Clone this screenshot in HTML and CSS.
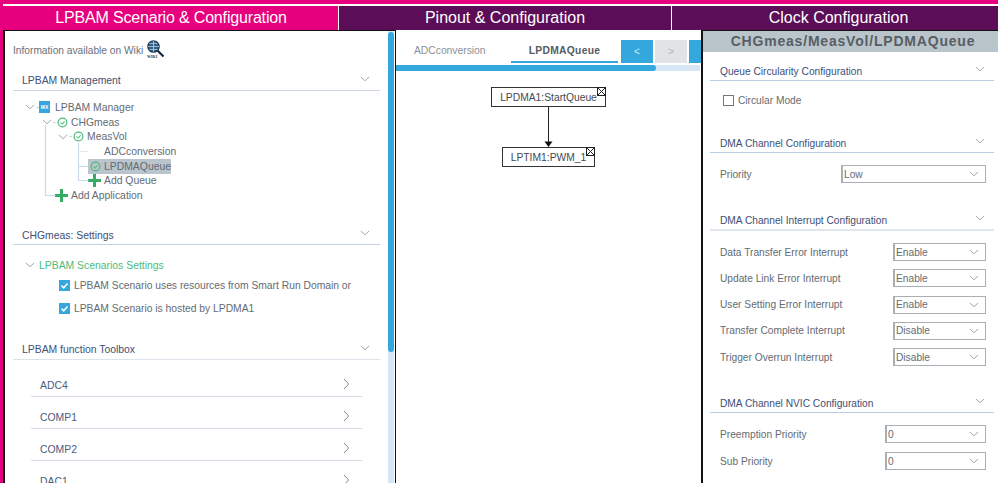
FILE: index.html
```html
<!DOCTYPE html>
<html lang="en">
<head>
<meta charset="utf-8">
<title>LPBAM Scenario &amp; Configuration</title>
<link rel="stylesheet" href="styles.css">
</head>
<body>
<svg class="defs" width="0" height="0" aria-hidden="true">
  <symbol id="chev" viewBox="0 0 12 7"><path d="M1 1l5 4.600L11 1" fill="none" stroke="#8f98a3" stroke-width="1"/></symbol>
  <symbol id="right" viewBox="0 0 7 12"><path d="M1 1l4.600 5L1 11" fill="none" stroke="#7f8791" stroke-width="1"/></symbol>
  <symbol id="ok" viewBox="0 0 12 12"><circle cx="6" cy="6" r="4.800" fill="none" stroke="#4dbb7b" stroke-width="1.300"/><path d="M3.800 6l1.700 1.700 2.800-3" fill="none" stroke="#4dbb7b" stroke-width="1.100"/></symbol>
  <symbol id="plus" viewBox="0 0 13 13"><path d="M6.500 0v13M0 6.500h13" fill="none" stroke="#36ab63" stroke-width="3"/></symbol>
  <symbol id="tick" viewBox="0 0 11 11"><rect width="11" height="11" fill="#34a8dc"/><path d="M2.500 5.600l2.200 2.200 3.800-4.400" fill="none" stroke="#fff" stroke-width="1.500"/></symbol>
  <symbol id="close" viewBox="0 0 9 9"><rect x=".5" y=".5" width="8" height="8" fill="#fff" stroke="#222"/><path d="M1 1l7 7M8 1l-7 7" stroke="#222" stroke-width="1"/></symbol>
</svg>
<div class="app">
  <nav class="tabs">
    <div class="tab tab-active tab-one">LPBAM Scenario &amp; Configuration</div>
    <div class="tab tab-two">Pinout &amp; Configuration</div>
    <div class="tab tab-three">Clock Configuration</div>
  </nav>
  <main class="panels">
    <section class="panel-left">
      <div class="left-scroll">
        <div class="wiki-line">
          <span>Information available on Wiki</span>
          <svg class="wiki-icon" width="19" height="19" viewBox="0 0 19 19">
            <circle cx="7.500" cy="6.500" r="5.600" fill="#2f5f86" stroke="#1d3c58" stroke-width="1.400"/>
            <path d="M2 6.500h11M7.500 1v11M3.500 3.500h8M3.500 9.500h8" stroke="#cfe0ee" stroke-width=".7" fill="none"/>
            <path d="M11.500 10.500l6 6" stroke="#16283a" stroke-width="2.200"/>
            <text x="1" y="18" class="wiki-text">WIKI</text>
          </svg>
        </div>
        <div class="sec-head left-head first-head"><span>LPBAM Management</span><svg class="chev"><use href="#chev"/></svg></div>
        <div class="tree">
          <svg class="tree-lines" width="80" height="110" viewBox="0 0 80 110">
            <path d="M32.500 34v70.500h10M65.500 52v37.500h10M65.500 75.500h10" fill="none" stroke="#c9d9ea" stroke-width="1.200"/>
            <path d="M65.500 60.500h10" fill="none" stroke="#dfe8f2" stroke-width="1"/>
            <path d="M23 16.500h3M40 31.500h3M56 45.500h3" fill="none" stroke="#c9d9ea" stroke-width="1"/>
          </svg>
          <div class="node lvl0"><svg class="tw"><use href="#chev"/></svg><span class="mx">MX</span><span>LPBAM Manager</span></div>
          <div class="node lvl1"><svg class="tw"><use href="#chev"/></svg><svg class="ok"><use href="#ok"/></svg><span>CHGmeas</span></div>
          <div class="node lvl2"><svg class="tw"><use href="#chev"/></svg><svg class="ok"><use href="#ok"/></svg><span>MeasVol</span></div>
          <div class="node lvl3"><span class="blank"></span><span>ADCconversion</span></div>
          <div class="node lvl3"><span class="selected"><svg class="ok"><use href="#ok"/></svg><span>LPDMAQueue</span></span></div>
          <div class="node lvl3"><svg class="plus"><use href="#plus"/></svg><span>Add Queue</span></div>
          <div class="node lvl4"><svg class="plus"><use href="#plus"/></svg><span>Add Application</span></div>
        </div>
        <div class="sec-head left-head settings-head"><span>CHGmeas: Settings</span><svg class="chev"><use href="#chev"/></svg></div>
        <div class="group-title"><svg class="tw"><use href="#chev"/></svg><span>LPBAM Scenarios Settings</span></div>
        <div class="check-line"><svg class="tick"><use href="#tick"/></svg><span>LPBAM Scenario uses resources from Smart Run Domain or</span></div>
        <div class="check-line"><svg class="tick"><use href="#tick"/></svg><span>LPBAM Scenario is hosted by LPDMA1</span></div>
        <div class="sec-head left-head toolbox-head"><span>LPBAM function Toolbox</span><svg class="chev"><use href="#chev"/></svg></div>
        <ul class="tools">
          <li class="tool"><span>ADC4</span><svg class="right"><use href="#right"/></svg></li>
          <li class="tool"><span>COMP1</span><svg class="right"><use href="#right"/></svg></li>
          <li class="tool"><span>COMP2</span><svg class="right"><use href="#right"/></svg></li>
          <li class="tool"><span>DAC1</span><svg class="right"><use href="#right"/></svg></li>
        </ul>
      </div>
      <div class="v-scroll"><div class="v-thumb"></div></div>
    </section>
    <section class="panel-mid">
      <div class="q-tabs">
        <div class="q-tab">ADCconversion</div>
        <div class="q-tab q-tab-on">LPDMAQueue</div>
        <div class="q-btn q-blue">&lt;</div>
        <div class="q-btn q-grey">&gt;</div>
        <div class="q-btn q-blue q-cut"></div>
      </div>
      <div class="h-scroll"><div class="h-thumb"></div></div>
      <div class="canvas">
        <div class="box box-a">LPDMA1:StartQueue<svg class="x"><use href="#close"/></svg></div>
        <svg class="link" width="11" height="41" viewBox="0 0 11 41"><path d="M5.500 0v35" stroke="#222" stroke-width="1"/><path d="M1.500 34.500h8L5.500 40z" fill="#111"/></svg>
        <div class="box box-b">LPTIM1:PWM_1<svg class="x"><use href="#close"/></svg></div>
      </div>
    </section>
    <section class="panel-right">
      <h2 class="r-title">CHGmeas/MeasVol/LPDMAQueue</h2>
      <div class="sec-head r-head r-head-1"><span>Queue Circularity Configuration</span><svg class="chev"><use href="#chev"/></svg></div>
      <div class="circ"><span class="cbox"></span><span>Circular Mode</span></div>
      <div class="sec-head r-head r-head-2"><span>DMA Channel Configuration</span><svg class="chev"><use href="#chev"/></svg></div>
      <div class="f-row f-first"><span>Priority</span><div class="sel sel-wide">Low<svg class="chev-s"><use href="#chev"/></svg></div></div>
      <div class="sec-head r-head r-head-3"><span>DMA Channel Interrupt Configuration</span><svg class="chev"><use href="#chev"/></svg></div>
      <div class="f-row f-first"><span>Data Transfer Error Interrupt</span><div class="sel">Enable<svg class="chev-s"><use href="#chev"/></svg></div></div>
      <div class="f-row"><span>Update Link Error Interrupt</span><div class="sel">Enable<svg class="chev-s"><use href="#chev"/></svg></div></div>
      <div class="f-row"><span>User Setting Error Interrupt</span><div class="sel">Enable<svg class="chev-s"><use href="#chev"/></svg></div></div>
      <div class="f-row"><span>Transfer Complete Interrupt</span><div class="sel">Disable<svg class="chev-s"><use href="#chev"/></svg></div></div>
      <div class="f-row"><span>Trigger Overrun Interrupt</span><div class="sel">Disable<svg class="chev-s"><use href="#chev"/></svg></div></div>
      <div class="sec-head r-head r-head-4"><span>DMA Channel NVIC Configuration</span><svg class="chev"><use href="#chev"/></svg></div>
      <div class="f-row f-first"><span>Preemption Priority</span><div class="sel sel-mid">0<svg class="chev-s"><use href="#chev"/></svg></div></div>
      <div class="f-row f-last"><span>Sub Priority</span><div class="sel sel-mid">0<svg class="chev-s"><use href="#chev"/></svg></div></div>
    </section>
  </main>
</div>
</body>
</html>
```
FILE: styles.css
```css
* { box-sizing: border-box; }
html, body { margin: 0; height: 100%; overflow: hidden; }
body { font-family: "Liberation Sans", Arial, sans-serif; font-size: 10.400px; color: #5f6770; background: #fff; }
.defs { position: absolute; }
svg { display: block; flex: none; }

.app { height: 483px; width: 998px; display: flex; flex-direction: column; border-top: 4px solid #e6007e; border-left: 3px solid #e6007e; background: #fff; padding-top: 2px; }

.tabs { display: flex; height: 24px; flex: none; gap: 1px; }
.tab { color: #fff; font-size: 16px; display: flex; align-items: center; justify-content: center; background: #5c0d58; }
.tab-active { background: #e6007e; }
.tab-one { width: 335px; letter-spacing: -.17px; padding-left: 1px; }
.tab-two { width: 332px; }
.tab-three { flex: 1; padding-left: 7px; }

.panels { flex: 1; display: flex; min-height: 0; }

.panel-left { width: 393px; flex: none; border: 1px solid #111; border-width: 1px 1px 0 2px; display: flex; position: relative; overflow: hidden; }
.left-scroll { flex: 1; min-width: 0; padding-left: 8px; }
.v-scroll { width: 6px; flex: none; margin-right: 1px; background: #d6e6f5; }
.v-thumb { height: 320px; background: #34a8dc; border-radius: 3px; margin-top: 1px; }

.wiki-line { height: 28px; display: flex; align-items: center; gap: 3px; margin-top: 5px; color: #6a717a; font-size: 10.200px; }
.wiki-icon { margin-top: -2px; }
.wiki-text { font-family: "Liberation Serif", serif; font-size: 4px; fill: #1d3c58; font-weight: 700; }

.sec-head { display: flex; justify-content: space-between; align-items: flex-end; color: #3d4f78; line-height: 14px; }
.chev { width: 10px; height: 6px; margin-bottom: 6px; }
.left-head { width: 367px; height: 25px; padding: 0 10px 2px 9px; font-size: 10.400px; border-bottom: 1.500px solid #ccd7e6; }
.first-head { margin-top: 2px; }

.tree { position: relative; height: 108px; padding-top: 9px; }
.tree-lines { position: absolute; left: 0; top: 0; }
.node { height: 14.700px; display: flex; align-items: center; font-size: 10.400px; color: #646b73; }
.tw { width: 10px; height: 6px; }
.ok { width: 11px; height: 11px; margin-right: 3px; }
.plus { width: 13px; height: 13px; margin-right: 3px; }
.lvl0 { padding-left: 12px; }
.lvl0 .tw { margin-right: 4px; }
.lvl1 { padding-left: 29px; }
.lvl1 .tw { margin-right: 5px; }
.lvl2 { padding-left: 45px; }
.lvl2 .tw { margin-right: 5px; }
.lvl3 { padding-left: 75px; }
.lvl4 { padding-left: 42px; }
.blank { width: 16px; }
.selected { display: flex; align-items: center; height: 15px; width: 83px; padding-left: 2px; background: #b9c4cc; }
.mx { width: 11px; height: 12px; margin-right: 5px; background: #34a8dc; color: #fff; font-size: 5px; font-weight: 700; display: flex; align-items: center; justify-content: center; }

.settings-head { margin-top: 21px; padding-bottom: 1px; border-bottom-width: 1px; border-bottom-color: #c3d0e4; }
.settings-head .chev { margin-bottom: 7px; }
.group-title { display: flex; align-items: center; gap: 4px; height: 14px; margin-top: 13px; padding-left: 12px; color: #4dbb7b; font-size: 10.400px; }
.check-line { display: flex; align-items: center; gap: 4px; height: 15px; margin-left: 46px; white-space: nowrap; color: #646b73; font-size: 10.300px; }
.group-title + .check-line { margin-top: 5.500px; }
.check-line + .check-line { margin-top: 8px; }
.tick { width: 11px; height: 11px; }
.toolbox-head { margin-top: 17px; height: 27px; border-bottom-color: #dde3ea; }

.tools { list-style: none; margin: 5px 0 0; padding: 0; }
.tool { width: 331px; height: 32px; margin-left: 18px; padding: 14.500px 12px 0 9px; display: flex; justify-content: space-between; align-items: flex-start; border-bottom: 1.500px solid #d6dde6; color: #4a5c7a; font-size: 10.400px; line-height: 14px; }
.right { width: 7px; height: 12px; margin-top: -1px; }

.panel-mid { width: 305px; flex: none; display: flex; flex-direction: column; position: relative; overflow: hidden; border-top: 1px solid #fff; }
.q-tabs { height: 32px; padding-top: 9px; display: flex; align-items: stretch; }
.q-tab { font-size: 10.300px; color: #8b9097; width: 115px; padding-left: 18px; padding-top: 5px; }
.q-tab-on { width: 107px; padding: 5px 0 0; text-align: center; font-weight: 700; color: #555c63; letter-spacing: .3px; border-bottom: 2px solid #34a8dc; margin-right: 3px; }
.q-btn { width: 32px; margin-right: 2px; display: flex; align-items: center; justify-content: center; font-size: 10px; }
.q-blue { background: #34a8dc; color: #cfe9f6; }
.q-grey { background: #e1e4e7; color: #aeb4b9; }
.q-cut { flex: 1; margin-right: 0; }
.h-scroll { height: 6px; margin-top: 2px; margin-right: 1px; background: #d6e6f5; }
.h-thumb { width: 260px; height: 100%; background: #34a8dc; border-radius: 0 3px 3px 0; }

.canvas { position: relative; flex: 1; }
.box { position: absolute; border: 1px solid #333; background: #fff; height: 20px; display: flex; align-items: center; justify-content: center; color: #44494f; font-size: 10.300px; }
.box-a { left: 95px; top: 16px; width: 115px; }
.box-b { left: 106px; top: 76px; width: 93px; }
.x { position: absolute; right: -1px; top: -1px; width: 9px; height: 9px; }
.link { position: absolute; left: 147px; top: 36px; }

.panel-right { flex: 1; min-width: 0; border-left: 2px solid #111; border-top: 1px solid #111; overflow: hidden; }
.r-title { margin: 0; height: 21px; padding-left: 5px; background: #b9c4cb; color: #585e64; font-size: 14px; font-weight: 700; letter-spacing: .8px; text-align: center; line-height: 21px; }
.r-head { width: 284px; margin-left: 7px; padding: 0 9px 1px 10px; font-size: 10.200px; border-bottom: 1px solid #b9cde3; height: 28px; }
.r-head .chev { margin-bottom: 7px; }
.r-head-1 { height: 29px; }
.r-head-2 { margin-top: 18px; }
.r-head-3 { margin-top: 20px; border-bottom: 2px solid #dfe6ee; }
.r-head-4 { margin-top: 19px; }
.circ { display: flex; align-items: center; gap: 4px; height: 14px; margin: 12px 0 0 20px; color: #646b73; font-size: 10.200px; }
.cbox { width: 11px; height: 11px; border: 1px solid #777; background: #fff; }
.f-row { display: flex; justify-content: space-between; align-items: center; height: 18px; margin-top: 8.300px; padding: 0 12px 0 17px; color: #646b73; font-size: 10.200px; }
.f-first { margin-top: 12px; }
.f-last { margin-top: 9px; }
.sel { width: 93px; height: 18px; border: 1px solid #a9afb5; border-left-width: 2px; display: flex; align-items: center; justify-content: space-between; padding: 0 6px 0 1px; color: #646b73; font-size: 10.200px; }
.sel-wide { width: 145px; }
.sel-mid { width: 101px; }
.chev-s { width: 10px; height: 6px; }
```
